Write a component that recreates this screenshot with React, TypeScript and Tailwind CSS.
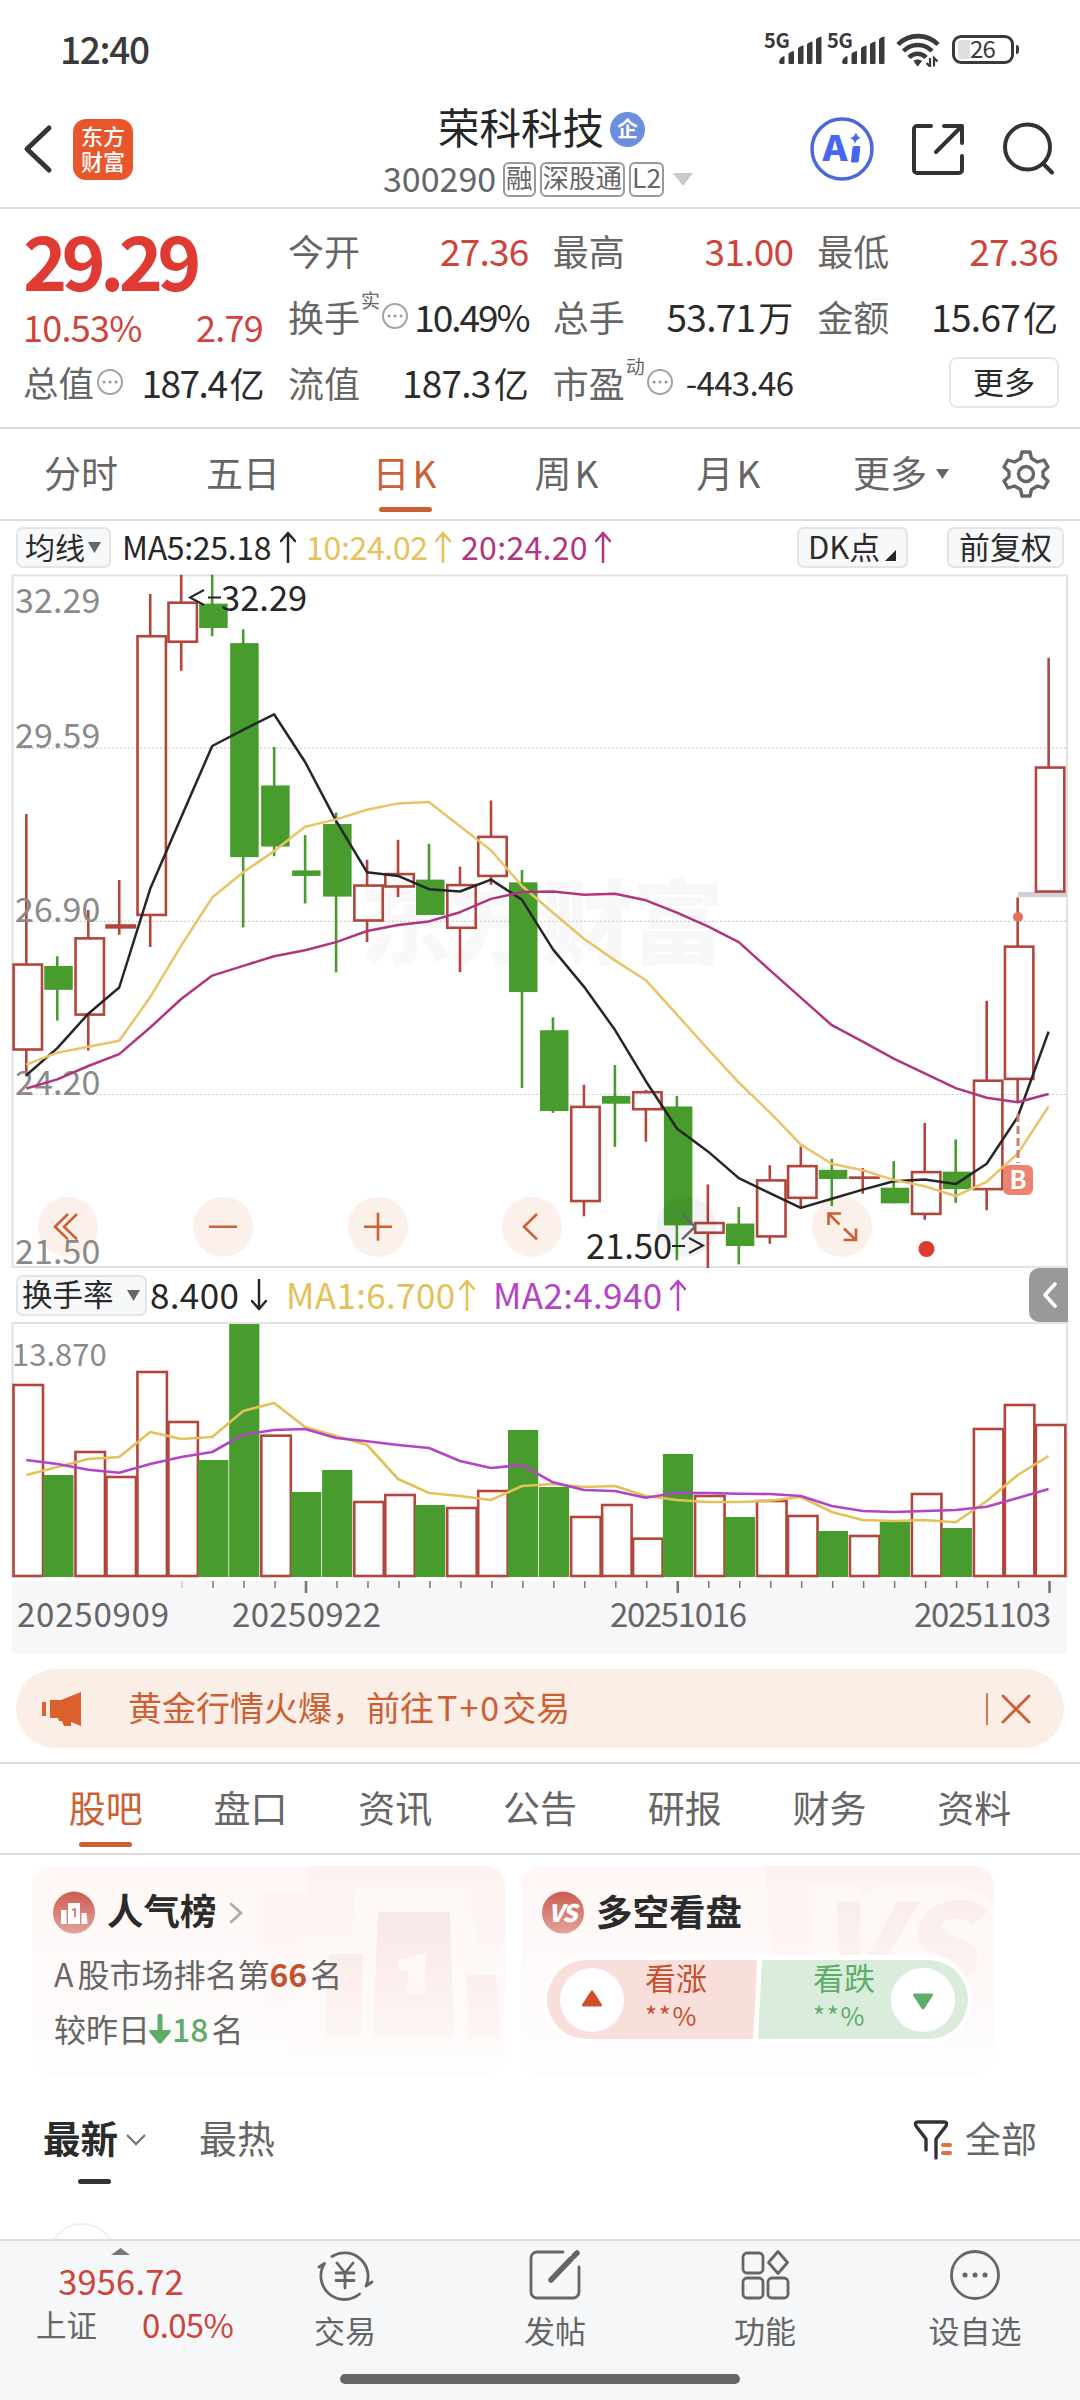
import type { ReactNode } from 'react';

const GREEN = '#479c2d';
const RED = '#b2453c';

// chart units, top to bottom: [up, high, body top, body bottom, low]
const CANDLES: [number, number, number, number, number][] = [
  [1, 553, 881, 1066, 1125],
  [0, 863, 884, 936, 1003],
  [1, 762, 824, 990, 1068],
  [1, 697, 796, 800, 816],
  [1, 74, 166, 773, 843],
  [1, 32, 93, 178, 241],
  [0, 32, 95, 148, 166],
  [0, 151, 181, 647, 800],
  [0, 407, 491, 624, 645],
  [0, 599, 676, 688, 748],
  [0, 550, 575, 733, 898],
  [1, 653, 709, 785, 832],
  [1, 609, 684, 711, 734],
  [0, 618, 696, 773, 773],
  [1, 668, 708, 801, 898],
  [1, 524, 603, 688, 707],
  [0, 675, 702, 941, 1150],
  [0, 996, 1024, 1200, 1204],
  [1, 1143, 1191, 1396, 1429],
  [0, 1100, 1167, 1184, 1278],
  [1, 1154, 1159, 1196, 1267],
  [0, 1167, 1190, 1449, 1525],
  [1, 1360, 1444, 1465, 1542],
  [0, 1409, 1445, 1494, 1534],
  [1, 1318, 1351, 1473, 1489],
  [1, 1277, 1320, 1389, 1411],
  [0, 1304, 1328, 1348, 1407],
  [1, 1324, 1345, 1345, 1380],
  [0, 1309, 1367, 1401, 1401],
  [1, 1226, 1333, 1424, 1437],
  [0, 1262, 1332, 1370, 1400],
  [1, 960, 1134, 1370, 1416],
  [1, 735, 842, 1130, 1182],
  [1, 213, 452, 722, 722],
];

const MA5 = [1122, 1063, 988, 931, 716, 560, 405, 370, 336, 440, 568, 680, 688, 717, 722, 696, 740, 848, 929, 1023, 1135, 1238, 1288, 1346, 1379, 1411, 1391, 1371, 1353, 1349, 1359, 1315, 1213, 1027];
const MA10 = [1099, 1073, 1060, 1047, 952, 840, 735, 680, 634, 581, 565, 544, 530, 527, 580, 632, 710, 768, 825, 872, 915, 990, 1065, 1138, 1203, 1273, 1315, 1329, 1350, 1364, 1385, 1354, 1293, 1190];
const MA20 = [1151, 1131, 1102, 1076, 1018, 956, 905, 884, 863, 850, 832, 808, 795, 787, 767, 738, 723, 722, 729, 727, 741, 768, 798, 832, 893, 953, 1013, 1049, 1086, 1118, 1150, 1171, 1181, 1163];

const VOLUME = [375, 645, 576, 651, 336, 486, 600, 192, 527, 696, 630, 726, 705, 735, 744, 693, 510, 681, 771, 735, 836, 582, 708, 771, 723, 768, 813, 828, 786, 702, 804, 507, 435, 495];
// turnover bars follow the close-to-close direction, not the candle body
const VOL_UP = [1, 0, 1, 1, 1, 1, 0, 0, 1, 0, 0, 1, 1, 0, 1, 1, 0, 0, 1, 1, 1, 0, 1, 0, 1, 1, 0, 1, 0, 1, 0, 1, 1, 1];
const VMA1 = [645, 621, 597, 591, 516, 537, 531, 453, 429, 501, 528, 555, 657, 699, 708, 720, 678, 672, 681, 678, 708, 720, 726, 726, 722, 711, 756, 780, 783, 780, 787, 723, 645, 588];
const VMA2 = [600, 612, 629, 638, 612, 591, 576, 524, 510, 507, 534, 544, 555, 564, 603, 624, 615, 667, 690, 693, 713, 698, 699, 701, 702, 708, 738, 753, 756, 753, 750, 740, 714, 687];

const cx = (i: number) => 26.3 + i * 30.98;
const py = (v: number) => 560 + v * 0.4592;
const vy = (v: number) => 1260 + v / 3;
const line = (data: number[], y: (v: number) => number) =>
  data.map((v, i) => `${cx(i).toFixed(1)},${y(v).toFixed(1)}`).join(' ');

const SignalBars = () => (
  <svg viewBox="0 0 43 28" className="h-7 w-[43px]" fill="#3a3a3a">
    <path d="M0 26q1-5 5.500-6v7q0 1-1 1H2q-2 0-2-2zM9.500 18q1-2 5.500-3v12q0 1-1 1h-3.500q-1 0-1-1zM19 12.500q1-2 5.500-3V27q0 1-1 1H20q-1 0-1-1zM28 8.500q1-2 5.500-3V27q0 1-1 1H29q-1 0-1-1zM37 3.500q1-2 5.500-3V27q0 1-1 1H38q-1 0-1-1z" />
  </svg>
);

const StatusBar = () => (
  <div className="flex h-[101px] items-start pl-[60px] text-[#3a3a3a]">
    <span className="mt-[30px] w-[704px] text-[37px] leading-none font-medium tracking-[-0.035em]">12:40</span>
    <span className="mt-[30px] w-[14px] text-[20px] leading-none font-bold tracking-[-0.02em]">5G</span>
    <div className="mt-[36px] ml-px"><SignalBars /></div>
    <span className="mt-[30px] ml-[5px] w-[15px] text-[20px] leading-none font-bold tracking-[-0.02em]">5G</span>
    <div className="mt-[36px]"><SignalBars /></div>
    <svg viewBox="0 0 44 34" className="mt-[33px] ml-[11px] h-[34px] w-11" fill="none" stroke="#3a3a3a">
      <path d="M2 11.500a28 28 0 0 1 40 0" strokeWidth="4.600" />
      <path d="M7.500 18a20 20 0 0 1 28.500 0" strokeWidth="4.600" />
      <path d="M13 24.500a11.500 11.500 0 0 1 17 0" strokeWidth="4.600" />
      <path d="M18 28q3.500-2.500 7.500 0L21.700 33z" fill="#3a3a3a" strokeWidth="1" />
      <path d="M34 25v8.500L30.500 30M38 33.500V25l3.500 3.500" strokeWidth="2.200" />
    </svg>
    <div className="mt-[35px] ml-[12px] flex h-[29px] w-[62px] items-center rounded-[9px] border-[3px] border-[#3a3a3a] pl-[3px]">
      <span className="h-[19px] w-[12px] shrink-0 rounded-l-[4px] bg-[#dfdfdf]" />
      <span className="pb-[3px] text-[24px] leading-none tracking-[-0.03em]">26</span>
    </div>
    <span className="mt-[45px] ml-[2px] h-[9px] w-[3px] rounded-r bg-[#3a3a3a]" />
  </div>
);

const Tag = ({ children }: { children: ReactNode }) => (
  <span className="flex h-[35px] shrink-0 items-center rounded-[6px] border-2 border-[#999] px-[1px] pb-[3px] text-[26.500px] leading-none whitespace-nowrap text-[#666]">
    {children}
  </span>
);

const TitleBar = () => (
  <div className="flex h-[106px] items-start">
    <svg viewBox="0 0 30 50" className="mt-[23px] ml-[23px] h-[50px] w-[30px]" fill="none" stroke="#333" strokeWidth="5" strokeLinecap="round" strokeLinejoin="round">
      <path d="M26 4 4 25l22 21" />
    </svg>
    <div className="mt-[18px] ml-[20px] flex h-[61px] w-[60px] flex-col items-center justify-center rounded-[13px] bg-[#e9562b] pb-[4px] text-[22px] leading-[25px] font-medium text-white">
      <span>东方</span>
      <span>财富</span>
    </div>
    <div className="mt-[4px] ml-[249px] flex w-[313px] flex-col">
      <div className="ml-[56px] flex h-[48px] items-center gap-[6px]">
        <span className="pb-[4px] text-[41.500px] leading-none whitespace-nowrap text-[#262626]">荣科科技</span>
        <span className="flex h-[35px] w-[35px] items-center justify-center rounded-full bg-[#6b8ee0] pb-[3px] text-[21px] leading-none font-bold text-white">企</span>
      </div>
      <div className="mt-[7px] flex h-[38px] items-center">
        <span className="w-[121px] shrink-0 pb-[3px] pl-px text-[34px] leading-none text-[#666]">300290</span>
        <div className="flex gap-[4px]">
          <Tag>融</Tag>
          <Tag>深股通</Tag>
          <Tag>L2</Tag>
        </div>
        <svg viewBox="0 0 20 13" className="ml-[9px] h-[13px] w-5 shrink-0" fill="#c9c9c9"><path d="M0 0h20L10 13z" /></svg>
      </div>
    </div>
    <svg viewBox="0 0 64 64" className="mt-[16px] ml-[115px] h-16 w-16" fill="#4668f0">
      <circle cx="32" cy="32" r="30" stroke="#4a68dc" strokeWidth="3.500" fill="none" />
      <text x="12.500" y="44" fontSize="35" fontWeight="900" textLength="25" lengthAdjust="spacingAndGlyphs">A</text>
      <path d="M42.500 30.500q.2-1.500 2-1.500h4.500q1.500 0 1.300 1.500l-1.500 13.500q-.3 1.500-2 1.500h-4.500q-1.500 0-1.300-1.500z" />
      <path d="M46 15q1 5 5 6-5 1-6 6-1-5-5-6 5-1 6-6z" />
    </svg>
    <svg viewBox="0 0 54 54" className="mt-[21px] ml-[37px] h-[54px] w-[54px]" fill="none" stroke="#333" strokeWidth="4" strokeLinecap="round" strokeLinejoin="round">
      <path d="M20 4H6a3 3 0 0 0-3 3v41a3 3 0 0 0 3 3h42a3 3 0 0 0 3-3V34" />
      <path d="M33 4h18v17M50 5 25 30" />
    </svg>
    <svg viewBox="0 0 54 56" className="mt-[20px] ml-[36px] h-[56px] w-[54px]" fill="none" stroke="#333" strokeWidth="4" strokeLinecap="round">
      <circle cx="26.500" cy="26" r="22.500" />
      <path d="m42 42.500 9 9" />
    </svg>
  </div>
);

const DotsBadge = ({ className = '' }: { className?: string }) => (
  <svg viewBox="0 0 28 28" className={`h-7 w-7 shrink-0 ${className}`} fill="none" stroke="#a3a3a3" strokeWidth="2">
    <circle cx="14" cy="14" r="12" />
    <path d="M8 14h.1M14 14h.1M20 14h.1" stroke="#999" strokeWidth="3" strokeLinecap="round" />
  </svg>
);

interface QuoteProps {
  label: string;
  value: string;
  unit?: string;
  red?: boolean;
  sup?: string;
  tight?: boolean;
  small?: boolean;
}

const Quote = ({ label, value, unit, red, sup, tight, small }: QuoteProps) => (
  <div className="flex h-[66px] items-center leading-none whitespace-nowrap">
    <span className="text-[36px] text-[#666]">{label}</span>
    {sup && <span className="mb-[34px] ml-px text-[19px] text-[#666]">{sup}</span>}
    {sup && <DotsBadge className="ml-px" />}
    <span className={`mr-[-1px] ml-auto ${small ? 'text-[33px]' : 'text-[37px]'} ${tight ? 'tracking-[-0.055em]' : 'tracking-[-0.02em]'} ${red ? 'text-[#cf433b]' : 'text-[#2b2b2b]'}`}>
      {value}
      {unit && <span className="ml-[3px] text-[35px] tracking-normal">{unit}</span>}
    </span>
  </div>
);

const QuotePanel = () => (
  <div className="flex h-[220px] gap-[25px] border-b-2 border-[#dcdcdc] pr-[23px] pl-[23px] pt-[8px]">
    <div className="w-[240px] shrink-0">
      <div className="flex h-[86px] items-center pb-[4px] text-[75px] leading-none font-bold tracking-[-0.076em] text-[#df3b33]">29.29</div>
      <div className="flex h-[46px] items-center justify-between text-[36px] leading-none tracking-[-0.02em] text-[#cf433b]">
        <span>10.53%</span>
        <span>2.79</span>
      </div>
      <div className="flex h-[66px] items-center leading-none">
        <span className="text-[35.500px] text-[#666]">总值</span>
        <DotsBadge className="ml-[2px]" />
        <span className="ml-auto text-[37px] tracking-[-0.04em] text-[#2b2b2b]">
          187.4<span className="ml-[3px] text-[35px]">亿</span>
        </span>
      </div>
    </div>
    <div className="grid flex-1 grid-cols-3 content-start gap-x-[25px]">
      <Quote label="今开" value="27.36" red />
      <Quote label="最高" value="31.00" red />
      <Quote label="最低" value="27.36" red />
      <Quote label="换手" value="10.49%" sup="实" tight />
      <Quote label="总手" value="53.71" unit="万" />
      <Quote label="金额" value="15.67" unit="亿" />
      <Quote label="流值" value="187.3" unit="亿" />
      <Quote label="市盈" value="-443.46" sup="动" small />
      <div className="flex h-[66px] items-center justify-end">
        <span className="mr-[-2px] flex h-[51px] w-[110px] items-center justify-center rounded-[8px] border-2 border-[#e6e6e6] pb-1 text-[31px] leading-none text-[#2b2b2b]">更多</span>
      </div>
    </div>
  </div>
);

const PERIODS = ['分时', '五日', '日K', '周K', '月K'];

const PeriodTabs = () => (
  <div className="flex h-[92px] border-b-2 border-[#dcdcdc]">
    {PERIODS.map((p) => (
      <div key={p} className={`flex w-[162px] flex-col items-center pt-[25px] text-[37px] leading-none ${p === '日K' ? 'text-[#cc6033]' : 'text-[#666]'}`}>
        <span className={p.endsWith('K') ? 'pl-[2px] tracking-[0.08em]' : ''}>{p}</span>
        {p === '日K' && <span className="mt-[16px] h-[5px] w-[53px] rounded-full bg-[#cc6033]" />}
      </div>
    ))}
    <span className="ml-[43px] pt-[25px] text-[37px] leading-none text-[#666]">更多</span>
    <svg viewBox="0 0 13 10" className="mt-[40px] ml-[9px] h-[10px] w-[13px]" fill="#666"><path d="M0 0h13L6.500 10z" /></svg>
    <svg viewBox="0 0 48 48" className="mt-[21px] ml-[53px] h-12 w-12" fill="none" stroke="#666" strokeWidth="3.400" strokeLinejoin="round">
      <path d="M20 2h8l1.500 6.500 6 3.500 6.500-2 4 7-5 4.500v5l5 4.500-4 7-6.500-2-6 3.500L28 46h-8l-1.500-6.500-6-3.500-6.500 2-4-7 5-4.500v-5L2 17l4-7 6.500 2 6-3.500z" />
      <circle cx="24" cy="24" r="7.500" />
    </svg>
  </div>
);

const Arrow = ({ down = false }: { down?: boolean }) => (
  <svg viewBox="0 0 16 32" className="h-8 w-4 shrink-0" fill="none" stroke="currentColor" strokeWidth="2.500" strokeLinecap="round" strokeLinejoin="round">
    {down ? <path d="M8 1v29M1 22l7 8 7-8" /> : <path d="M8 31V2M1 10l7-8 7 8" />}
  </svg>
);

const Chip = ({ children, className }: { children: ReactNode; className: string }) => (
  <span className={`flex h-[41px] shrink-0 items-center rounded-[7px] border-2 border-[#e3e4e8] bg-[#f7f8fa] leading-none tracking-normal whitespace-nowrap text-[#2b2b2b] ${className}`}>
    {children}
  </span>
);

const MaRow = () => (
  <div className="flex h-[53px] items-center pb-px pl-4 text-[32px] leading-none tracking-[-0.01em]">
    <Chip className="w-[95px] pl-[7px] text-[30px]">
      <span className="pb-[3px]">均线</span>
      <svg viewBox="0 0 13 11" className="ml-[3px] h-[11px] w-[13px]" fill="#666"><path d="M0 0h13L6.500 11z" /></svg>
    </Chip>
    <span className="ml-[11px] flex w-[184px] items-center text-[#262626]"><span className="w-[158px] pb-[3px]">MA5:25.18</span><Arrow /></span>
    <span className="flex w-[155px] items-center text-[#e8c05e]"><span className="w-[129px] pb-[3px]">10:24.02</span><Arrow /></span>
    <span className="flex w-[336px] items-center text-[#b1357e]"><span className="w-[134px] pb-[3px] tracking-[0.01em]">20:24.20</span><Arrow /></span>
    <Chip className="w-[111px] pl-[9px] text-[31px]">
      <span className="pb-[3px]">DK点</span>
      <svg viewBox="0 0 11 11" className="mt-[16px] ml-[5px] h-[11px] w-[11px] shrink-0" fill="#262626"><path d="M11 0v11H0z" /></svg>
    </Chip>
    <Chip className="ml-[39px] w-[117px] justify-center text-[31px]"><span className="pb-[3px]">前复权</span></Chip>
  </div>
);

const KLineChart = () => (
  <svg viewBox="0 574 1080 694" className="block h-[694px] w-[1080px] overflow-visible" fill="none">
    <text x="359" y="957" fontSize="92" fontWeight="900" fill="#f8f8f8" letterSpacing="-1">东方财富</text>
    {[748.2, 921.3, 1094.5].map((y) => (
      <path key={y} d={`M12 ${y}H1067`} stroke="#cfcfcf" strokeWidth="1.200" strokeDasharray="2 2" />
    ))}
    <path d="M12.500 1267V575.500H1067V1267z" stroke="#e2e2e2" strokeWidth="2" />
    <g fill="#fbf0ea">
      {[68, 223, 378, 532, 842].map((x) => (
        <circle key={x} cx={x} cy="1226.700" r="30" />
      ))}
    </g>
    <path d="M1018 894.500h49" stroke="#d0d1d6" strokeWidth="5" />
    {CANDLES.map(([up, h, t, b, l], i) => {
      const x = cx(i);
      if (up) {
        return (
          <g key={i} stroke={RED} strokeWidth="2.600">
            <path d={`M${x} ${py(h)}V${py(t)}M${x} ${py(b)}V${py(l)}`} />
            <rect x={x - 12.7} y={py(t)} width="28.400" height={Math.max(py(b) - py(t), 0.1)} />
          </g>
        );
      }
      return (
        <g key={i} fill={GREEN}>
          <rect x={x - 1.3} y={py(h)} width="2.600" height={py(l) - py(h)} />
          <rect x={x - 13} y={py(t)} width="28.500" height={py(b) - py(t)} />
        </g>
      );
    })}
    <g fontSize="34" fill="#8a8a8a" letterSpacing="0.100">
      <text x="15" y="612.500">32.29</text>
      <text x="15" y="747.500">29.59</text>
      <text x="15" y="921.500">26.90</text>
      <text x="15" y="1094.500">24.20</text>
      <text x="15" y="1264">21.50</text>
    </g>
    <circle cx="686.500" cy="1226.700" r="30" fill="#000" fillOpacity="0.050" />
    <g strokeWidth="2.500" strokeLinejoin="round">
      <polyline points={line(MA5, py)} stroke="#262626" />
      <polyline points={line(MA10, py)} stroke="#ebc267" />
      <polyline points={line(MA20, py)} stroke="#b1357e" />
    </g>
    <g stroke="#cc6033" strokeWidth="2.600">
      <path d="m68 1214-13 12.700 13 12.700M77 1214l-13 12.700 13 12.700" />
      <path d="M209 1226.700h28M364 1226.700h28M378 1212.700v28" />
      <path d="m537 1214-13 12.700 13 12.700" />
      <path d="m828.500 1213.500 11 11M828.500 1225v-11.500H841M856 1240l-12-11.500M856 1228.500V1240h-12.500" />
    </g>
    <path d="m682 1214 13 12.700-13 12.700" stroke="#666" strokeWidth="2.400" />
    <g stroke="#262626" strokeWidth="2">
      <path d="m204 590-14 7.500 14 7.500M208 597.500h13M672 1246h13M689 1238l14 7.500-14 7.500" />
    </g>
    <g fontSize="34.500" fill="#262626">
      <text x="221" y="611">32.29</text>
      <text x="586" y="1258.500">21.50</text>
    </g>
    <circle cx="1018" cy="917" r="5" fill="#e76c5a" />
    <path d="M1018 1114v49" stroke="#cf7b6d" strokeWidth="3" strokeDasharray="8 4" />
    <rect x="1003" y="1165" width="30" height="30" rx="6" fill="#ec8370" />
    <text x="1018" y="1189" fontSize="25" fontWeight="700" fill="#fff" textAnchor="middle">B</text>
    <circle cx="926.500" cy="1249" r="8" fill="#dd3a32" />
  </svg>
);

const TurnoverHeader = () => (
  <div className="flex h-[54px] items-center pl-4 text-[35px] leading-none tracking-[0.01em]">
    <Chip className="w-[131px] pl-[4px] text-[30.500px]">
      <span className="pb-[3px]">换手率</span>
      <svg viewBox="0 0 13 11" className="ml-[13px] h-[11px] w-[13px] shrink-0" fill="#666"><path d="M0 0h13L6.500 11z" /></svg>
    </Chip>
    <span className="ml-[3px] flex w-[136px] items-center text-[#262626]"><span className="w-[101px] pb-[3px]">8.400</span><Arrow down /></span>
    <span className="flex w-[207px] items-center text-[#e3c157]"><span className="w-[173px] pb-[3px]">MA1:6.700</span><Arrow /></span>
    <span className="flex items-center text-[#b344c6]"><span className="w-[177px] pb-[3px]">MA2:4.940</span><Arrow /></span>
    <span className="mr-[12px] ml-auto flex h-[54px] w-[39px] items-center justify-center rounded-l-[10px] bg-[#999]">
      <svg viewBox="0 0 16 26" className="ml-[2px] h-[26px] w-4" fill="none" stroke="#fff" strokeWidth="3.600" strokeLinecap="round" strokeLinejoin="round">
        <path d="M13 2 3 13l10 11" />
      </svg>
    </span>
  </div>
);

const TurnoverChart = () => (
  <svg viewBox="0 1322 1080 332" className="block h-[332px] w-[1080px]" fill="none">
    <path d="M12.500 1578V1323H1067V1578" stroke="#e2e2e2" strokeWidth="2" />
    <rect x="12" y="1581" width="1055" height="73" fill="#f7f7fa" />
    <text x="12" y="1366" fontSize="31" fill="#8a8a8a">13.870</text>
    {VOLUME.map((v, i) =>
      VOL_UP[i] ? (
        <rect key={i} x={cx(i) - 12.8} y={vy(v)} width="29.500" height={1576 - vy(v)} stroke={RED} strokeWidth="2.600" />
      ) : (
        <rect key={i} x={cx(i) - 14} y={vy(v)} width="30.200" height={1577 - vy(v)} fill={GREEN} />
      ),
    )}
    <g strokeWidth="2.600" strokeLinejoin="round">
      <polyline points={line(VMA1, vy)} stroke="#e3c157" />
      <polyline points={line(VMA2, vy)} stroke="#b344c6" />
    </g>
    {VOLUME.map((_, i) => {
      if (i < 5) return null;
      const major = i === 9 || i === 21 || i === 33;
      return <path key={i} d={`M${cx(i) + 0.9} 1581v${major ? 12 : 7}`} stroke={i === 5 ? '#c8c8c8' : '#777'} strokeWidth={major ? 2.6 : 1.5} />;
    })}
    <g fontSize="33" fill="#666">
      <text x="17" y="1627" textLength="152">20250909</text>
      <text x="232" y="1627" textLength="149">20250922</text>
      <text x="610" y="1627" textLength="137">20251016</text>
      <text x="914" y="1627" textLength="137">20251103</text>
    </g>
  </svg>
);

const PromoBanner = () => (
  <div className="mx-4 mt-[15px] flex h-[79px] items-center rounded-full bg-[#fbeee6] text-[#cc6033]">
    <svg viewBox="0 0 40 36" className="ml-[26px] h-9 w-10" fill="#dc602b">
      <path d="M0 11h4v14H0zM8 9h11L39 1v34l-5-2-5-2v4h-7l-2-5h-3l-1-3H8z" />
    </svg>
    <span className="ml-[46px] pb-[3px] text-[34px] leading-none">
      黄金行情火爆，前往<span className="mr-[1px] ml-[3px] tracking-[0.06em]">T+0</span>交易
    </span>
    <span className="ml-auto h-8 w-[2px] bg-[#cc7a55]" />
    <svg viewBox="0 0 30 30" className="mr-[33px] ml-[13px] h-[30px] w-[30px]" fill="none" stroke="currentColor" strokeWidth="2.800" strokeLinecap="round">
      <path d="m2 2 26 26M28 2 2 28" />
    </svg>
  </div>
);

const SECTIONS = ['股吧', '盘口', '资讯', '公告', '研报', '财务', '资料'];

const SectionTabs = () => (
  <div className="mt-[14px] flex h-[93px] border-y-2 border-[#dcdcdc] px-[33.500px]">
    {SECTIONS.map((s, i) => (
      <div key={s} className={`flex flex-1 flex-col items-center pt-[25px] text-[37px] leading-none ${i === 0 ? 'text-[#cc6033]' : 'text-[#666]'}`}>
        <span>{s}</span>
        {i === 0 && <span className="mt-[16px] h-[5px] w-[53px] rounded-full bg-[#cc6033]" />}
      </div>
    ))}
  </div>
);

const RankCard = () => (
  <div className="relative h-[210px] w-[473px] overflow-hidden rounded-[20px] bg-gradient-to-b from-[#fef7f5] to-[#fefdfd] leading-none">
    <svg viewBox="32 1866 473 210" className="absolute inset-0 h-full w-full">
      <defs>
        <linearGradient id="rankA" x1="0" y1="0" x2="0" y2="1">
          <stop offset="0" stopColor="#fdf2f0" />
          <stop offset="1" stopColor="#fefbfb" />
        </linearGradient>
        <linearGradient id="rankB" x1="0" y1="0" x2="0" y2="1">
          <stop offset="0" stopColor="#f8e8e7" />
          <stop offset="1" stopColor="#fdf6f5" />
        </linearGradient>
        <linearGradient id="rankC" x1="0" y1="0" x2="0" y2="1">
          <stop offset="0" stopColor="#cc5c53" />
          <stop offset="1" stopColor="#e3a39c" />
        </linearGradient>
        <linearGradient id="rankD" x1="0" y1="0" x2="0" y2="1">
          <stop offset="0" stopColor="#fef8f6" />
          <stop offset="1" stopColor="#fefbfa" />
        </linearGradient>
      </defs>
      <path d="M307 1866h198v172H263v-145h44z" fill="url(#rankA)" />
      <path d="M355 1887h117l3 60h30v106H290l6-115h57z" fill="url(#rankD)" />
      <path d="M378 1912h72l4 126h-81zM329 1954h34l-2 84h-36zM467 1975h29l5 63h-33z" fill="url(#rankB)" />
      <path d="m398 1960 28-7-1 41h-18l1-24-9 1z" fill="#fef8f6" />
      <circle cx="74" cy="1912.600" r="21" fill="url(#rankC)" />
      <path d="M61 1910h5.500v14H61zM68 1903h12v21H68zM81.500 1913h5l1 11h-6z" fill="#fff" />
      <path d="m72 1910 3-1v8" fill="none" stroke="#d4736b" strokeWidth="1.800" />
      <path d="m231 1904 10 9-10 9" fill="none" stroke="#aaa" strokeWidth="2.600" strokeLinecap="round" />
    </svg>
    <div className="relative pt-[26px] pl-[75px] text-[36.500px] font-bold text-[#2b2b2b]">人气榜</div>
    <div className="relative flex pt-[28px] pl-[22px] text-[32px] text-[#666]">
      <span>A</span><span className="ml-[4px]">股市场排名第</span><span className="font-bold text-[#c4522e]">66</span><span className="ml-[3px]">名</span>
    </div>
    <div className="relative flex pt-[23px] pl-[22px] text-[32px] text-[#666]">
      较昨日
      <svg viewBox="0 0 22 30" className="mt-[2px] ml-[-1px] h-[30px] w-[22px]" fill="#5fad6a">
        <path d="M8.500 2a2.500 2.500 0 0 1 5 0v14H21q2 1 0 3L12.500 29q-1.500 1.500-3 0L1 19q-2-2 0-3h7.500z" />
      </svg>
      <span className="ml-[1px] font-medium text-[#5fad6a]">18</span>
      <span className="ml-[3px]">名</span>
    </div>
  </div>
);

const VoteCard = () => (
  <div className="relative h-[210px] w-[473px] overflow-hidden rounded-[20px] bg-gradient-to-b from-[#fef7f5] to-[#fefdfd] leading-none">
    <svg viewBox="521 1866 473 210" className="absolute inset-0 h-full w-full">
      <defs>
        <linearGradient id="voteC" x1="0" y1="0" x2="0" y2="1">
          <stop offset="0" stopColor="#cc5c53" />
          <stop offset="1" stopColor="#e3a39c" />
        </linearGradient>
        <linearGradient id="voteA" x1="0" y1="0" x2="0" y2="1">
          <stop offset="0" stopColor="#fdf2f0" />
          <stop offset="1" stopColor="#fefbfb" />
        </linearGradient>
        <linearGradient id="voteB" x1="0" y1="0" x2="0" y2="1">
          <stop offset="0" stopColor="#f9eae8" />
          <stop offset="1" stopColor="#fdf6f5" />
        </linearGradient>
      </defs>
      <path d="M765 1866h229v177H778z" fill="url(#voteA)" />
      <path d="M807 1884h48l10 12 20-12h62q31 4 47 20v42l-20 14q10 14 10 30H817z" fill="#fef8f6" />
      <text x="814" y="1991" fontSize="120" fontWeight="900" fontStyle="italic" fill="url(#voteB)" textLength="160" lengthAdjust="spacingAndGlyphs">VS</text>
      <rect x="543" y="1955" width="429" height="89" rx="44" fill="#fff" />
      <path d="M586.500 1960H757l-4 79H586.500a39.500 39.500 0 0 1 0-79z" fill="#f8dfdc" />
      <path d="M762 1960h166.500a39.500 39.500 0 0 1 0 79H758z" fill="#daeddd" />
      <circle cx="592" cy="2000" r="32" fill="#fff" />
      <circle cx="923" cy="2000" r="32" fill="#fff" />
      <path d="m592 1992 8.500 13h-17z" fill="#cf502c" stroke="#cf502c" strokeWidth="3" strokeLinejoin="round" />
      <path d="m923 2008 8.500-13h-17z" fill="#5fad6a" stroke="#5fad6a" strokeWidth="3" strokeLinejoin="round" />
      <circle cx="563" cy="1912.600" r="21" fill="url(#voteC)" />
      <text x="562" y="1922" fontSize="24" fontWeight="900" fontStyle="italic" fill="#fff" textAnchor="middle" letterSpacing="-1.500">VS</text>
    </svg>
    <div className="relative pt-[27px] pl-[75px] text-[36.500px] font-bold text-[#2b2b2b]">多空看盘</div>
    <div className="relative flex pt-[31px] pl-[124px]">
      <div className="w-[168px] text-[#c4522e]">
        <div className="text-[31px]">看涨</div>
        <div className="mt-[10px] text-[26px] tracking-[0.06em]">**%</div>
      </div>
      <div className="text-[#5fad6a]">
        <div className="text-[31px]">看跌</div>
        <div className="mt-[10px] text-[26px] tracking-[0.06em]">**%</div>
      </div>
    </div>
  </div>
);

const Feed = () => (
  <div className="relative h-[163px] overflow-hidden leading-none">
    <div className="flex items-start pt-[42px]">
      <div className="ml-[43px] flex w-[75px] flex-col items-center text-[37.500px] font-bold text-[#2b2b2b]">
        最新
        <span className="mt-[23px] ml-[35px] h-[5px] w-[33px] shrink-0 self-start rounded-full bg-[#333]" />
      </div>
      <svg viewBox="0 0 20 12" className="mt-[16px] ml-[8px] h-3 w-5" fill="none" stroke="#777" strokeWidth="2.400"><path d="m1 1 9 9 9-9" /></svg>
      <span className="ml-[53px] text-[38px] text-[#666]">最热</span>
      <svg viewBox="0 0 40 44" className="mt-px ml-auto h-11 w-10" fill="none" stroke="#333" strokeWidth="3.400" strokeLinejoin="round" strokeLinecap="round">
        <path d="M13 31V20L3 7q-2-4 2-4h26q4 0 2 4L23 20v19" />
        <path d="M30 26h7M30 34h7" stroke="#e0703c" strokeWidth="4" />
      </svg>
      <span className="mr-[43px] ml-[12px] pt-px text-[36px] text-[#666]">全部</span>
    </div>
    <span className="absolute top-[147px] left-[48px] h-[68px] w-[68px] rounded-full border-2 border-[#efefef]" />
  </div>
);

const NavItem = ({ label, children }: { label: string; children: ReactNode }) => (
  <div className="flex w-[210px] flex-col items-center pt-[7px]">
    <svg viewBox="0 0 60 54" className="h-[54px] w-[60px]" fill="none" stroke="#666" strokeWidth="2.800" strokeLinecap="round" strokeLinejoin="round">
      {children}
    </svg>
    <span className="mt-[12px] text-[31px] leading-none text-[#666]">{label}</span>
  </div>
);

const BottomNav = () => (
  <div className="h-[161px] border-t-2 border-[#dcdcdc] bg-[#f6f7f9]">
    <div className="flex h-[133px]">
      <div className="flex w-[240px] flex-col items-center leading-none">
        <svg viewBox="0 0 19 7" className="mt-[7px] h-[7px] w-[19px]" fill="#777"><path d="M0 7h19L9.500 0z" /></svg>
        <span className="mt-[8px] ml-[2px] text-[34.500px] tracking-[0.005em] text-[#cf433b]">3956.72</span>
        <div className="mt-[10px] flex w-full items-center pl-[36px]">
          <span className="w-[106px] text-[30.500px] text-[#666]">上证</span>
          <span className="text-[33px] tracking-[-0.02em] text-[#cf433b]">0.05%</span>
        </div>
      </div>
      <NavItem label="交易">
        <path d="M17 8.500A23.500 23.500 0 0 1 51 38l6-4M44.500 46A23.500 23.500 0 0 1 9.500 15.500L4 19" />
        <path d="m22 15 8 10 8-10M30 25v15M21 25h18M21 32.500h18" />
      </NavItem>
      <NavItem label="发帖">
        <path d="M38 4H12a6 6 0 0 0-6 6v34a6 6 0 0 0 6 6h36a6 6 0 0 0 6-6V19" />
        <path d="m52 5-3 3M46 11 26 32" strokeWidth="5.500" />
      </NavItem>
      <NavItem label="功能">
        <rect x="8" y="5" width="20" height="20" rx="4" />
        <path d="m43 3.500 9.500 11L43 25.500l-9.500-11z" />
        <rect x="8" y="30" width="20" height="20" rx="4" />
        <rect x="33" y="30" width="20" height="20" rx="4" />
      </NavItem>
      <NavItem label="设自选">
        <circle cx="30" cy="27" r="23.500" />
        <path d="M20 27h.1M30 27h.1M40 27h.1" strokeWidth="5" />
      </NavItem>
    </div>
    <div className="mx-auto h-[10px] w-[400px] rounded-full bg-[#666865]" />
  </div>
);

export default function App() {
  return (
    <div className="h-[2400px] w-[1080px] overflow-hidden bg-white font-['Noto_Sans_CJK_SC',sans-serif]">
      <div className="h-[209px] border-b-2 border-[#dcdcdc]">
        <StatusBar />
        <TitleBar />
      </div>
      <QuotePanel />
      <PeriodTabs />
      <MaRow />
      <KLineChart />
      <TurnoverHeader />
      <TurnoverChart />
      <PromoBanner />
      <SectionTabs />
      <div className="mt-[11px] flex gap-4 pl-8">
        <RankCard />
        <VoteCard />
      </div>
      <Feed />
      <BottomNav />
    </div>
  );
}
